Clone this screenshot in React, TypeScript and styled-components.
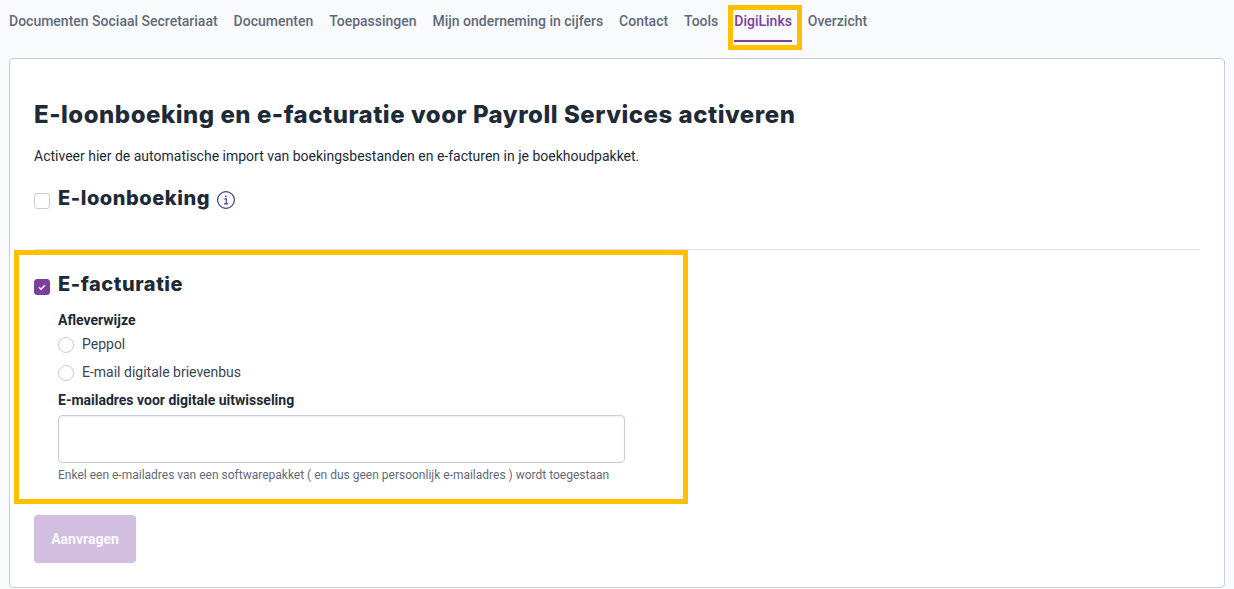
import React from "react";
import styled, { createGlobalStyle } from "styled-components";

const Global = createGlobalStyle`
  html, body { margin: 0; padding: 0; background: #f9fafc; }
  body { font-family: Roboto, "Liberation Sans", sans-serif; color: #1e2a38; }
  * { box-sizing: border-box; }
`;

const Page = styled.div`
  width: 1234px;
  height: 589px;
  overflow: hidden;
  padding: 0 9px 0 9px;
`;

const Nav = styled.nav`
  display: flex;
  gap: 15.95px;
  height: 58px;
  align-items: flex-start;
`;

const Tab = styled.a<{ $active?: boolean }>`
  position: relative;
  display: block;
  height: 42px;
  padding-top: 12px;
  font-size: 14px;
  line-height: 18px;
  font-weight: 500;
  white-space: nowrap;
  color: ${(p) => (p.$active ? "#7b3fa0" : "#5f6b7a")};
  border-bottom: 2px solid ${(p) => (p.$active ? "#7b3fa0" : "transparent")};
`;

const Annotation = styled.span`
  position: absolute;
  border: 5px solid #ffc000;
  pointer-events: none;
`;

const TabAnnotation = styled(Annotation)`
  left: -6px;
  right: -10px;
  top: 5px;
  height: 45px;
`;

const Panel = styled.main`
  position: relative;
  width: 1216px;
  height: 530px;
  background: #fff;
  border: 1px solid #c5cedb;
  border-radius: 4px;
  padding: 40px 24px 0;
`;

const Title = styled.h1`
  margin: 0;
  font-family: Inter, "Open Sans", sans-serif;
  font-size: 24px;
  line-height: 32px;
  font-weight: 800;
  letter-spacing: 0.52px;
  color: #1e2a38;
`;

const Lead = styled.p`
  margin: 15px 0 0;
  font-size: 14px;
  line-height: 20px;
  color: #1e2a38;
`;

const OptionHead = styled.div`
  display: flex;
  align-items: center;
  gap: 8px;
  height: 28px;
`;

const Box = styled.span<{ $checked?: boolean }>`
  display: flex;
  align-items: center;
  justify-content: center;
  width: 16px;
  height: 16px;
  margin-top: 5px;
  border-radius: 3px;
  border: 1px solid ${(p) => (p.$checked ? "#7b3fa0" : "#c5cedb")};
  background: ${(p) => (p.$checked ? "#7b3fa0" : "#fff")};
`;

const OptionTitle = styled.h2`
  margin: 0;
  font-family: Inter, "Open Sans", sans-serif;
  font-size: 20px;
  line-height: 28px;
  font-weight: 800;
  letter-spacing: 0.55px;
  color: #1e2a38;
`;

const FirstOption = styled.section`
  margin-top: 18px;
`;

const Divider = styled.hr`
  margin: 37px 0 0;
  width: 1166px;
  border: 0;
  border-top: 1px solid #dfe3e9;
`;

const SecondOption = styled.section`
  margin-top: 20px;
`;

const Fields = styled.div`
  padding-left: 24px;
  margin-top: 13px;
`;

const Label = styled.div`
  font-size: 14px;
  line-height: 18px;
  font-weight: 700;
  color: #1e2a38;
`;

const RadioRow = styled.label`
  display: flex;
  align-items: center;
  gap: 8px;
  height: 28px;
  font-size: 14px;
  color: #3a4656;
`;

const RadioList = styled.div`
  margin-top: 1px;
`;

const Radio = styled.span`
  width: 16px;
  height: 16px;
  margin-top: 1px;
  border-radius: 50%;
  border: 1px solid #c5cedb;
  background: #fff;
`;

const EmailLabel = styled(Label)`
  margin-top: 5px;
`;

const Input = styled.input`
  display: block;
  width: 567px;
  height: 48px;
  margin-top: 6px;
  border: 1px solid #c5cedb;
  border-radius: 4px;
  background: #fff;
  box-shadow: inset 0 1px 2px rgba(30, 42, 56, 0.08);
`;

const Hint = styled.p`
  margin: 4px 0 0;
  font-size: 12px;
  line-height: 16px;
  color: #5f6b7a;
`;

const Submit = styled.button`
  display: block;
  width: 102px;
  height: 48px;
  margin-top: 32px;
  border: 0;
  border-radius: 4px;
  background: #d2bfe0;
  color: #fbf8fd;
  font-family: Roboto, sans-serif;
  font-size: 14px;
  font-weight: 700;
`;

const SectionAnnotation = styled(Annotation)`
  left: 4px;
  top: 191px;
  width: 674px;
  height: 254px;
`;

const InfoSvg = styled.svg`
  margin: 3px 0 0 -2px;
`;

const InfoIcon = () => (
  <InfoSvg width="20" height="20" viewBox="0 0 20 20" fill="none" aria-hidden="true">
    <circle cx="10" cy="10" r="8.4" stroke="#3d3a8c" strokeWidth="1.2" />
    <path d="M8.3 8.8h2v5M8 13.9h4.2" stroke="#5a3a96" strokeWidth="1.2" />
    <circle cx="9.9" cy="6.3" r="0.9" fill="#3d3a8c" />
  </InfoSvg>
);

const CheckIcon = () => (
  <svg width="10" height="10" viewBox="0 0 10 10" fill="none" aria-hidden="true">
    <path d="M2 5.2l2.1 2L8 3" stroke="#fff" strokeWidth="1.4" />
  </svg>
);

const tabs = [
  "Documenten Sociaal Secretariaat",
  "Documenten",
  "Toepassingen",
  "Mijn onderneming in cijfers",
  "Contact",
  "Tools",
  "DigiLinks",
  "Overzicht",
];

export default function App() {
  return (
    <Page>
      <Global />
      <Nav>
        {tabs.map((t) => (
          <Tab key={t} $active={t === "DigiLinks"}>
            {t}
            {t === "DigiLinks" && <TabAnnotation />}
          </Tab>
        ))}
      </Nav>
      <Panel>
        <Title>E-loonboeking en e-facturatie voor Payroll Services activeren</Title>
        <Lead>Activeer hier de automatische import van boekingsbestanden en e-facturen in je boekhoudpakket.</Lead>
        <FirstOption>
          <OptionHead>
            <Box />
            <OptionTitle>E-loonboeking</OptionTitle>
            <InfoIcon />
          </OptionHead>
        </FirstOption>
        <Divider />
        <SecondOption>
          <OptionHead>
            <Box $checked>
              <CheckIcon />
            </Box>
            <OptionTitle>E-facturatie</OptionTitle>
          </OptionHead>
          <Fields>
            <Label>Afleverwijze</Label>
            <RadioList>
              <RadioRow>
                <Radio />
                Peppol
              </RadioRow>
              <RadioRow>
                <Radio />
                E-mail digitale brievenbus
              </RadioRow>
            </RadioList>
            <EmailLabel>E-mailadres voor digitale uitwisseling</EmailLabel>
            <Input />
            <Hint>Enkel een e-mailadres van een softwarepakket ( en dus geen persoonlijk e-mailadres ) wordt toegestaan</Hint>
          </Fields>
        </SecondOption>
        <Submit disabled>Aanvragen</Submit>
        <SectionAnnotation />
      </Panel>
    </Page>
  );
}
